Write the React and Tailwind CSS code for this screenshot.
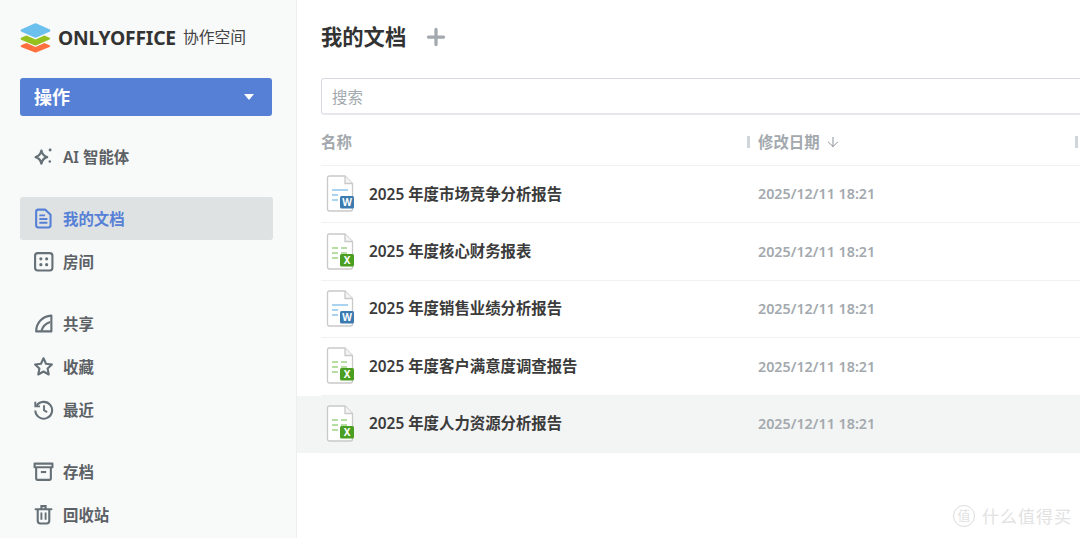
import React from "react";
import { Plus, ArrowDown } from "lucide-react";

const font = "font-['Noto_Sans','Noto_Sans_CJK_SC',sans-serif]";

const Logo = () => (
  <svg width="32" height="30" viewBox="0.5 0 32 30">
    <path d="M2 22 L7 20 L16 24 L25 20 L30.5 22.5 Q31 23.2 30 24 L17 29.3 Q16 29.7 15 29.3 L1.5 24 Q0.5 23 2 22 Z" fill="#ff6f3d" />
    <path d="M2 14.5 L7 12.5 L16 16.5 L25 12.5 L30.5 15 Q31 15.8 30 16.5 L17 22.3 Q16 22.7 15 22.3 L1.5 16.7 Q0.5 15.5 2 14.5 Z" fill="#95c11f" />
    <path d="M15 0.4 Q16 0 17 0.4 L30.5 6.6 Q31.3 7.5 30.5 8.4 L17 14.6 Q16 15 15 14.6 L1.5 8.4 Q0.7 7.5 1.5 6.6 Z" fill="#6cc0ee" />
  </svg>
);

const AiIcon = () => (
  <svg width="21" height="21" viewBox="0 0 20 20" fill="none" stroke="currentColor" strokeWidth="2.3">
    <path d="M8 4.4 C8.6 7.4 10 9.4 13.4 10.5 C10 11.6 8.6 13.6 8 16.6 C7.4 13.6 6 11.6 2.6 10.5 C6 9.4 7.4 7.4 8 4.4 Z" strokeLinejoin="round" />
    <circle cx="16.3" cy="3.8" r="1.4" fill="currentColor" stroke="none" />
    <circle cx="16" cy="14.8" r="1.2" fill="currentColor" stroke="none" />
  </svg>
);

const DocIcon = () => (
  <svg width="21" height="21" viewBox="0 0 20 20" fill="none" stroke="currentColor" strokeWidth="2">
    <path d="M3 3.5 Q3 1.5 5 1.5 H11.5 L16.7 6.5 V16.5 Q16.7 18.5 14.7 18.5 H5 Q3 18.5 3 16.5 Z" strokeLinejoin="round" />
    <path d="M6 7 H11.5 M6 10.5 H13.7 M6 14 H13.7" strokeWidth="1.8" />
  </svg>
);

const RoomIcon = () => (
  <svg width="21" height="21" viewBox="0 0 20 20" fill="none" stroke="currentColor" strokeWidth="2">
    <rect x="2" y="2" width="16.5" height="16.5" rx="2.5" />
    <circle cx="7.5" cy="7.5" r="1.5" fill="currentColor" stroke="none" />
    <circle cx="13" cy="7.5" r="1.5" fill="currentColor" stroke="none" />
    <circle cx="7.5" cy="13" r="1.5" fill="currentColor" stroke="none" />
    <circle cx="13" cy="13" r="1.5" fill="currentColor" stroke="none" />
  </svg>
);

const ShareIcon = () => (
  <svg width="21" height="21" viewBox="0 0 20 20" fill="none" stroke="currentColor" strokeWidth="2">
    <path d="M3 17.5 C3 9.5 9 3 17.5 2.5 V17.5 Z" strokeLinejoin="round" />
    <path d="M8 17 C9 13 12 10 16.5 8.5" />
  </svg>
);

const StarIcon = () => (
  <svg width="21" height="21" viewBox="0 0 20 20" fill="none" stroke="currentColor" strokeWidth="2" strokeLinejoin="round">
    <path d="M10 2.2 L12.4 7.4 L18 8.1 L13.9 12 L15 17.6 L10 14.8 L5 17.6 L6.1 12 L2 8.1 L7.6 7.4 Z" />
  </svg>
);

const RecentIcon = () => (
  <svg width="21" height="21" viewBox="0 0 20 20" fill="none" stroke="currentColor" strokeWidth="2">
    <path d="M3.4 6.5 A8 8 0 1 1 2.2 11" />
    <path d="M2.2 2.5 V7 H6.7" strokeWidth="1.8" />
    <path d="M10.5 6 V10.7 L13.5 12.5" strokeWidth="1.8" />
  </svg>
);

const ArchiveIcon = () => (
  <svg width="21" height="21" viewBox="0 0 20 20" fill="none" stroke="currentColor" strokeWidth="2">
    <path d="M1.5 2.5 H18.5 V6 H1.5 Z" strokeLinejoin="round" />
    <path d="M3 6 V17 Q3 18 4 18 H16 Q17 18 17 17 V6" />
    <path d="M7.5 10.5 H12.5" />
  </svg>
);

const TrashIcon = () => (
  <svg width="21" height="21" viewBox="0 0 20 20" fill="none" stroke="currentColor" strokeWidth="2">
    <path d="M2.5 5 H17.5 M8 4.5 V2 H12 V4.5" strokeLinecap="round" />
    <path d="M4.5 5 V16 Q4.5 18.5 7 18.5 H13 Q15.5 18.5 15.5 16 V5" />
    <path d="M8 8 V15 M12 8 V15" strokeWidth="1.8" />
  </svg>
);

// file thumbnails, docx and xlsx only differ in colour and letter
const FileIcon = ({ type }) => {
  const word = type === "word";
  const line = word ? "#a9d3ee" : "#b7dea2";
  return (
    <svg width="28" height="38" viewBox="0 0 28 38" fill="none">
      <path d="M1.5 3 Q1.5 1 3.5 1 H19 L26.5 8.5 V34 Q26.5 36 24.5 36 H3.5 Q1.5 36 1.5 34 Z" fill="#fff" stroke="#c9c9c9" strokeWidth="1.3" />
      <path d="M19 1 V8.5 H26.5" stroke="#c9c9c9" strokeWidth="1.3" fill="#f4f4f4" />
      {word ? (
        <path d="M6 15 H22 M6 20 H12 M6 25 H12" stroke={line} strokeWidth="2" />
      ) : (
        <path d="M6 15 H12 M15 15 H21 M6 20 H12 M15 20 H21 M6 25 H12" stroke={line} strokeWidth="2" />
      )}
      <rect x="14" y="21" width="14" height="12.5" rx="1.5" fill={word ? "#3c7bb0" : "#4a9e22"} />
      <text x="21" y="31.2" textAnchor="middle" fontSize="10" fontWeight="700" fill="#fff" fontFamily="Noto Sans">
        {word ? "W" : "X"}
      </text>
    </svg>
  );
};

const NavItem = ({ icon, label, active, className = "" }) => (
  <div
    className={`flex h-[43px] w-[253px] items-center gap-[9px] rounded-[3px] pl-[13px] text-[15.4px] font-semibold ${
      active ? "bg-[#dfe2e3] text-[#5580d6]" : "text-[#5c6166]"
    } ${className}`}
  >
    <span className={`flex h-[21px] w-[21px] shrink-0 items-center justify-center ${active ? "text-[#5580d6]" : "text-[#657077]"}`}>{icon}</span>
    <span className="pt-[2px]">{label}</span>
  </div>
);

const files = [
  { name: "2025 年度市场竞争分析报告", type: "word" },
  { name: "2025 年度核心财务报表", type: "excel" },
  { name: "2025 年度销售业绩分析报告", type: "word" },
  { name: "2025 年度客户满意度调查报告", type: "excel" },
  { name: "2025 年度人力资源分析报告", type: "excel", hover: true },
];

const FileRow = ({ file }) => (
  <div className={`flex h-[57.4px] items-center pl-6 ${file.hover ? "bg-[#f3f4f4]" : ""}`}>
    <div className={`flex h-full flex-1 items-center border-b border-[#eff1f2] ${file.hover ? "border-[#e9ebec]" : ""}`}>
      <div className="ml-[5px] w-[43px] shrink-0">
        <FileIcon type={file.type} />
      </div>
      <div className="w-[389px] shrink-0 text-[15.4px] font-semibold text-[#3b3b3b]">{file.name}</div>
      <div className="text-[14.3px] font-semibold text-[#a3a9ae]">2025/12/11 18:21</div>
    </div>
  </div>
);

export default function App() {
  return (
    <div className={`relative flex h-[538px] w-[1080px] overflow-hidden bg-white ${font}`}>
      <aside className="flex w-[297px] shrink-0 flex-col border-r border-[#eceef1] bg-[#f8f9f9] pl-5">
        <div className="mt-[23px] flex h-[29px] items-center">
          <Logo />
          <span className="ml-[6px] text-[19.3px] leading-none font-bold tracking-[-0.2px] text-[#333]">ONLYOFFICE</span>
          <span className="ml-[7px] text-[15.8px] leading-none text-[#444]">协作空间</span>
        </div>
        <div className="mt-[26px] flex h-[38px] w-[252px] items-center justify-between rounded-[3px] bg-[#5580d6] pr-[18px] pl-[14px] text-[18px] font-bold text-white">
          <span>操作</span>
          <span className="h-0 w-0 border-x-[5.5px] border-t-[6px] border-x-transparent border-t-white" />
        </div>
        <NavItem className="mt-[19px]" icon={<AiIcon />} label="AI 智能体" />
        <NavItem className="mt-[19px]" icon={<DocIcon />} label="我的文档" active />
        <NavItem icon={<RoomIcon />} label="房间" />
        <NavItem className="mt-[19px]" icon={<ShareIcon />} label="共享" />
        <NavItem icon={<StarIcon />} label="收藏" />
        <NavItem icon={<RecentIcon />} label="最近" />
        <NavItem className="mt-[19px]" icon={<ArchiveIcon />} label="存档" />
        <NavItem icon={<TrashIcon />} label="回收站" />
      </aside>

      <main className="flex min-w-0 flex-1 flex-col">
        <div className="mt-[22px] flex h-[30px] items-center pl-6">
          <h1 className="text-[21.3px] font-bold text-[#333]">我的文档</h1>
          <Plus size={26} strokeWidth={3} className="ml-[17px] text-[#a3a9ae]" />
        </div>
        <div className="mt-[26px] ml-6 flex h-[37px] w-[790px] items-center rounded-l-[3px] border border-b-2 border-[#d8dae0] border-b-[#e6e7ea] pt-[3px] pl-[10px] text-[15.4px] text-[#a3a9ae]">
          搜索
        </div>
        <div className="ml-6 flex h-[51px] items-center border-b border-[#eff1f2] text-[15.4px] font-semibold text-[#a3a9ae]">
          <span className="w-[426px] shrink-0 pt-[5px]">名称</span>
          <span className="mt-[4px] h-[12px] w-[3px] shrink-0 bg-[#d0d5da]" />
          <span className="mt-[5px] ml-[8px] w-[62px] shrink-0">修改日期</span>
          <ArrowDown size={16} strokeWidth={1.5} className="mt-[4px] ml-[5px] shrink-0 text-[#8c9298]" />
          <span className="mt-[4px] ml-[234px] h-[12px] w-[3px] shrink-0 bg-[#d0d5da]" />
        </div>
        {files.map((file) => (
          <FileRow key={file.name} file={file} />
        ))}
      </main>

      {/* site watermark in the corner */}
      <div className="absolute top-[505px] left-[953px] flex items-center gap-[7px] text-[#e2e2e2]">
        <span className="flex h-[22px] w-[22px] items-center justify-center rounded-full border border-[#dcdcdc] text-[13px]">值</span>
        <span className="text-[17px] leading-none tracking-[1px]">什么值得买</span>
      </div>
    </div>
  );
}
